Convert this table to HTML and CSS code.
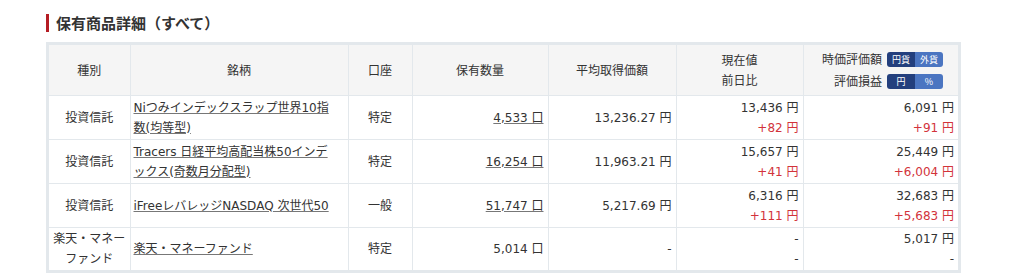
FILE: index.html
```html
<!DOCTYPE html>
<html lang="ja">
<head>
<meta charset="utf-8">
<title>保有商品詳細</title>
<link rel="stylesheet" href="styles.css">
</head>
<body>
<div class="page">
  <h2 class="title">保有商品詳細（すべて）</h2>
  <div class="table-wrap">
    <table class="holdings">
      <colgroup>
        <col class="c-type"><col class="c-name"><col class="c-acct"><col class="c-qty"><col class="c-avg"><col class="c-now"><col class="c-eval">
      </colgroup>
      <thead>
        <tr>
          <th>種別</th>
          <th>銘柄</th>
          <th>口座</th>
          <th>保有数量</th>
          <th>平均取得価額</th>
          <th><div>現在値</div><div>前日比</div></th>
          <th class="eval">
            <div class="eval-line"><span>時価評価額</span><span class="toggle"><span class="seg on">円貨</span><span class="seg off">外貨</span></span></div>
            <div class="eval-line"><span>評価損益</span><span class="toggle"><span class="seg on">円</span><span class="seg off">%</span></span></div>
          </th>
        </tr>
      </thead>
      <tbody>
        <tr>
          <td class="center">投資信託</td>
          <td class="name"><a href="#">Niつみインデックスラップ世界10指数(均等型)</a></td>
          <td class="center">特定</td>
          <td class="num"><a href="#">4,533 口</a></td>
          <td class="num">13,236.27 円</td>
          <td class="num"><div>13,436 円</div><div class="up">+82 円</div></td>
          <td class="num"><div>6,091 円</div><div class="up">+91 円</div></td>
        </tr>
        <tr>
          <td class="center">投資信託</td>
          <td class="name"><a href="#">Tracers 日経平均高配当株50インデックス(奇数月分配型)</a></td>
          <td class="center">特定</td>
          <td class="num"><a href="#">16,254 口</a></td>
          <td class="num">11,963.21 円</td>
          <td class="num"><div>15,657 円</div><div class="up">+41 円</div></td>
          <td class="num"><div>25,449 円</div><div class="up">+6,004 円</div></td>
        </tr>
        <tr>
          <td class="center">投資信託</td>
          <td class="name"><a href="#">iFreeレバレッジNASDAQ 次世代50</a></td>
          <td class="center">一般</td>
          <td class="num"><a href="#">51,747 口</a></td>
          <td class="num">5,217.69 円</td>
          <td class="num"><div>6,316 円</div><div class="up">+111 円</div></td>
          <td class="num"><div>32,683 円</div><div class="up">+5,683 円</div></td>
        </tr>
        <tr class="last">
          <td class="center">楽天・マネーファンド</td>
          <td class="name"><a href="#">楽天・マネーファンド</a></td>
          <td class="center">特定</td>
          <td class="num">5,014 口</td>
          <td class="num">-</td>
          <td class="num"><div>-</div><div>-</div></td>
          <td class="num"><div>5,017 円</div><div>-</div></td>
        </tr>
      </tbody>
    </table>
  </div>
</div>
</body>
</html>
```

FILE: styles.css
```css
html, body {
  margin: 0;
  padding: 0;
  background: #ffffff;
}

body {
  font-family: "DejaVu Sans", "Noto Sans CJK JP", sans-serif;
  font-size: 12px;
  color: #333333;
}

.page {
  padding: 14px 0 0 46px;
}

.title {
  margin: 0 0 10px 0;
  padding-left: 7px;
  border-left: 3px solid #b51d24;
  font-family: "Noto Sans CJK JP", sans-serif;
  font-size: 15px;
  font-weight: bold;
  line-height: 18px;
  color: #333333;
}

.table-wrap {
  width: 909px;
  border: 3px solid #e3e8ec;
}

.holdings {
  width: 909px;
  table-layout: fixed;
  border-collapse: collapse;
  border-style: hidden;
}

.c-type { width: 81px; }
.c-name { width: 218px; }
.c-acct { width: 64px; }
.c-qty { width: 136px; }
.c-avg { width: 128px; }
.c-now { width: 127px; }
.c-eval { width: 155px; }

.holdings th,
.holdings td {
  border: 1px solid #e3e8ec;
  line-height: 20px;
  padding: 1px 4px;
  vertical-align: middle;
}

.holdings th {
  height: 48px;
  background: #f5f5f5;
  font-weight: normal;
  text-align: center;
  color: #333333;
  font-family: "Noto Sans CJK JP", sans-serif;
}

.holdings td {
  height: 41px;
}

.holdings .last td {
  height: 39px;
}

.center {
  text-align: center;
  padding-left: 2px;
  padding-right: 2px;
}

.holdings td.center {
  padding-left: 2px;
  padding-right: 2px;
}

.holdings td.name {
  padding-left: 3px;
  padding-right: 12px;
}

.holdings td.num {
  text-align: right;
  padding-right: 4px;
}

a {
  color: #333333;
  text-decoration: underline;
  text-decoration-color: #777777;
}

.up {
  color: #d2333b;
}

.holdings th.eval {
  padding-right: 15px;
}

.eval-line {
  display: flex;
  justify-content: flex-end;
  align-items: center;
  gap: 5px;
  height: 22px;
}

.toggle {
  display: inline-flex;
  border-radius: 3px;
  overflow: hidden;
  height: 15px;
}

.seg {
  display: block;
  width: 28px;
  line-height: 15px;
  font-size: 9px;
  color: #ffffff;
  text-align: center;
}

.seg.on {
  background: #233f7d;
}

.seg.off {
  background: #4b75c1;
}
```
